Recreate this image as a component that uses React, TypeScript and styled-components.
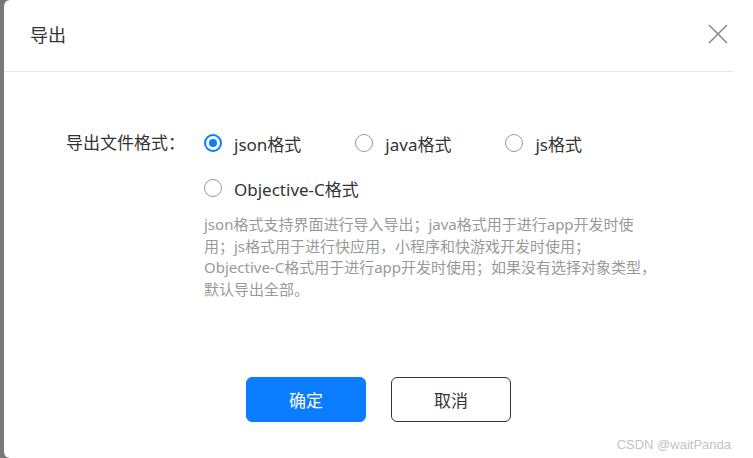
import React, { useState } from "react";
import styled, { createGlobalStyle } from "styled-components";

const GlobalStyle = createGlobalStyle`
  html, body {
    margin: 0;
    padding: 0;
    background: #787878;
    font-family: "Noto Sans", "Noto Sans CJK SC", sans-serif;
  }
`;

const Overlay = styled.div`
  width: 753px;
  height: 458px;
  display: flex;
  padding-left: 4px;
  box-sizing: border-box;
  position: relative;
  overflow: hidden;
`;

const Dialog = styled.div`
  flex: 1;
  background: #fff;
  border-radius: 6px 0 0 6px;
  display: flex;
  flex-direction: column;
`;

const Header = styled.div`
  height: 71px;
  margin-right: 20px;
  padding-left: 26px;
  display: flex;
  align-items: center;
  justify-content: space-between;
  border-bottom: 1px solid #e6e6e6;
`;

const Title = styled.h2`
  margin: 0;
  font-size: 18px;
  font-weight: 400;
  color: #333;
  margin-top: -3px;
`;

const CloseButton = styled.button`
  border: none;
  background: none;
  padding: 0;
  margin-right: 4px;
  margin-top: -4px;
  width: 22px;
  height: 22px;
  display: flex;
  align-items: center;
  justify-content: center;
  cursor: pointer;
`;

const Body = styled.div`
  padding: 56px 0 0 62px;
  display: grid;
  grid-template-columns: 138px 1fr;
`;

const Label = styled.div`
  font-size: 17px;
  color: #333;
  line-height: 30px;
`;

const Options = styled.div`
  display: flex;
  flex-wrap: wrap;
  row-gap: 15px;
  width: 450px;
`;

const Option = styled.label`
  display: flex;
  align-items: center;
  height: 30px;
  margin-right: 54px;
  font-size: 17px;
  color: #333;
  cursor: pointer;
`;

const Circle = styled.span<{ $checked: boolean }>`
  width: 18px;
  height: 18px;
  box-sizing: border-box;
  border-radius: 50%;
  border: ${(p) => (p.$checked ? "2px solid #0a7cff" : "1px solid #9a9a9a")};
  margin-right: 12px;
  display: flex;
  align-items: center;
  justify-content: center;
  &::after {
    content: "";
    display: ${(p) => (p.$checked ? "block" : "none")};
    width: 8px;
    height: 8px;
    border-radius: 50%;
    background: #0a7cff;
  }
`;

const Hint = styled.p`
  grid-column: 2;
  margin: 11px 0 0;
  font-size: 15px;
  line-height: 21.7px;
  color: #999;
  white-space: nowrap;
`;

const Footer = styled.div`
  display: flex;
  justify-content: center;
  gap: 25px;
  margin-top: 76px;
`;

const Button = styled.button<{ $primary?: boolean }>`
  width: 120px;
  height: 45px;
  border-radius: 6px;
  font-family: inherit;
  font-size: 17px;
  cursor: pointer;
  background: ${(p) => (p.$primary ? "#0a7cff" : "#fff")};
  color: ${(p) => (p.$primary ? "#fff" : "#333")};
  border: ${(p) => (p.$primary ? "1px solid #0a7cff" : "1px solid #333")};
`;

const Watermark = styled.div`
  position: absolute;
  right: 22px;
  bottom: 6px;
  font-family: "Liberation Sans", sans-serif;
  font-size: 13px;
  color: #c4c4c4;
`;

const formats = ["json格式", "java格式", "js格式", "Objective-C格式"];

export default function App() {
  const [value, setValue] = useState("json格式");
  return (
    <>
      <GlobalStyle />
      <Overlay>
        <Dialog>
          <Header>
            <Title>导出</Title>
            <CloseButton aria-label="close">
              <svg width="20" height="20" viewBox="0 0 20 20">
                <path d="M1 1L19 19M19 1L1 19" stroke="#8a8a8a" strokeWidth="1.6" />
              </svg>
            </CloseButton>
          </Header>
          <Body>
            <Label>导出文件格式：</Label>
            <Options>
              {formats.map((f) => (
                <Option key={f} onClick={() => setValue(f)}>
                  <Circle $checked={value === f} />
                  {f}
                </Option>
              ))}
            </Options>
            <Hint>
              json格式支持界面进行导入导出；java格式用于进行app开发时使
              <br />
              用；js格式用于进行快应用，小程序和快游戏开发时使用；
              <br />
              Objective-C格式用于进行app开发时使用；如果没有选择对象类型，
              <br />
              默认导出全部。
            </Hint>
          </Body>
          <Footer>
            <Button $primary>确定</Button>
            <Button>取消</Button>
          </Footer>
        </Dialog>
        <Watermark>CSDN @waitPanda</Watermark>
      </Overlay>
    </>
  );
}
